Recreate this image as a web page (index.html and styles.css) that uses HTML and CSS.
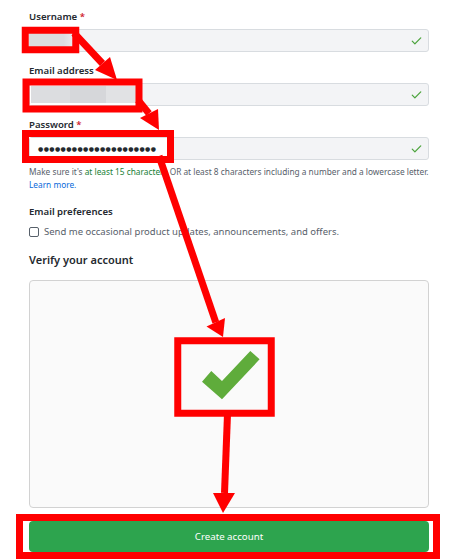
FILE: index.html
```html
<!DOCTYPE html>
<html lang="en">

<head>
    <meta charset="UTF-8">
    <meta name="viewport" content="width=device-width, initial-scale=1.0">
    <title>Create your account</title>
    <link rel="stylesheet" href="styles.css">
</head>

<body>

    <form class="signup">
        <div class="field">
            <label>Username <span class="req">*</span></label>
            <div class="input">
                <span class="mask mask-user"></span>
                <svg class="ok" viewBox="0 0 16 16" width="13" height="13"><path d="M13.78 4.22a.75.75 0 0 1 0 1.06l-7.250 7.25a.75.75 0 0 1-1.06 0L2.22 9.28a.75.75 0 0 1 1.06-1.06L6 10.94l6.72-6.72a.75.75 0 0 1 1.06 0Z"/></svg>
            </div>
        </div>

        <div class="field">
            <label>Email address</label>
            <div class="input">
                <span class="mask mask-email"><span></span></span>
                <svg class="ok" viewBox="0 0 16 16" width="13" height="13"><path d="M13.78 4.22a.75.75 0 0 1 0 1.06l-7.25 7.25a.75.75 0 0 1-1.06 0L2.22 9.28a.75.75 0 0 1 1.06-1.06L6 10.94l6.72-6.72a.75.75 0 0 1 1.06 0Z"/></svg>
            </div>
        </div>

        <div class="field">
            <label>Password <span class="req">*</span></label>
            <div class="input">
                <span class="mask mask-pass">●●●●●●●●●●●●●●●●●●●●●</span>
                <svg class="ok" viewBox="0 0 16 16" width="13" height="13"><path d="M13.78 4.22a.75.75 0 0 1 0 1.06l-7.25 7.25a.75.75 0 0 1-1.06 0L2.22 9.28a.75.75 0 0 1 1.06-1.06L6 10.94l6.72-6.72a.75.75 0 0 1 1.06 0Z"/></svg>
            </div>
        </div>

        <p class="note">Make sure it's <span class="good">at least 15 characters</span> OR at least 8 characters including a number and a lowercase letter.<br><a href="#">Learn more.</a></p>

        <div class="prefs">
            <h4>Email preferences</h4>
            <label class="optin"><span class="box"></span>Send me occasional product updates, announcements, and offers.</label>
        </div>

        <h3>Verify your account</h3>
        <div class="captcha">
            <svg class="done" viewBox="0 0 58 49" width="58" height="49"><polygon points="0,30.7 9.3,20 20,30 48.3,0 57.6,8.3 20,48.3"/></svg>
        </div>

        <button type="button" class="submit">Create account</button>
    </form>

    <!-- annotation overlay -->
    <svg class="marks" width="469" height="560" viewBox="0 0 469 560">
        <g class="frames">
            <rect x="25.25" y="30.25" width="50.5" height="19.5"/>
            <rect x="26" y="82" width="113" height="27"/>
            <rect x="25.5" y="133.5" width="145" height="26"/>
            <rect x="177.75" y="340.75" width="93.5" height="72.5"/>
            <rect x="19.5" y="517.5" width="417" height="38"/>
        </g>
        <g class="lines">
            <line x1="74" y1="33" x2="102.5" y2="63.5"/>
            <line x1="138" y1="100" x2="149" y2="113.5"/>
            <line x1="159" y1="156" x2="215.8" y2="322.3"/>
            <line x1="227.5" y1="414" x2="224.5" y2="493"/>
        </g>
        <g class="heads">
            <polygon points="95,70 110,57 117,80"/>
            <polygon points="140,118 158,109 159,130"/>
            <polygon points="206.5,326.5 225,318 223,337"/>
            <polygon points="213,493 235,493 223,513"/>
        </g>
    </svg>

</body>

</html>
```

FILE: styles.css
```css
body {
    margin: 0;
    font-family: "Noto Sans", "Open Sans", sans-serif;
    color: #24292f;
    background-color: #fff;
}

.signup {
    width: 400px;
    padding: 9px 0 0 29px;
}

.field + .field {
    margin-top: 11px;
}

.field label {
    display: block;
    font-size: 9.6px;
    font-weight: 600;
    line-height: 16px;
    margin-bottom: 4px;
}

.req {
    color: #cf222e;
}

.input {
    box-sizing: border-box;
    height: 23px;
    display: flex;
    align-items: center;
    padding-right: 5px;
    background-color: #f3f4f6;
    border: 1px solid #d8dce0;
    border-radius: 3px;
}

.ok {
    margin-left: auto;
    fill: #4aa33b;
}

.mask {
    align-self: stretch;
}

.mask-user {
    width: 42px;
    background: linear-gradient(to right, #dcdde0 80%, #e9eaec);
}

.mask-email {
    width: 107px;
    padding: 2px 1px;
    background-color: #fff;
    display: flex;
}

.mask-email span {
    flex: 1;
    background: linear-gradient(to right, #dcdde0 0 36%, #d6d7da 36% 70%, #e1e2e4 70%);
}

.mask-pass {
    width: 129px;
    padding-left: 8px;
    background-color: #fff;
    font-family: "DejaVu Sans", sans-serif;
    font-size: 6px;
    letter-spacing: 0.4px;
    line-height: 21px;
    color: #24292f;
}

.note {
    margin: 5px 0 0;
    font-size: 8.3px;
    line-height: 13px;
    color: #57606a;
    white-space: nowrap;
}

.good {
    color: #1a7f37;
}

.note a {
    color: #0969da;
    text-decoration: none;
}

.prefs {
    margin-top: 13px;
}

.prefs h4 {
    margin: 0;
    font-size: 9.6px;
    font-weight: 600;
    line-height: 16px;
}

.optin {
    display: flex;
    align-items: center;
    margin-top: 4px;
    font-size: 9.5px;
    line-height: 16px;
    color: #57606a;
}

.box {
    box-sizing: border-box;
    width: 10px;
    height: 10px;
    margin-right: 5px;
    border: 1px solid #57606a;
    border-radius: 2px;
    background-color: #fff;
}

h3 {
    margin: 11px 0 0;
    font-size: 11px;
    font-weight: 600;
    line-height: 18px;
}

.captcha {
    box-sizing: border-box;
    height: 228px;
    margin-top: 11px;
    padding-top: 70px;
    display: flex;
    justify-content: center;
    align-items: flex-start;
    background-color: #fafafa;
    border: 1px solid #d2d2d2;
    border-radius: 4px;
}

.done {
    margin-left: 3px;
    fill: #5fac3b;
}

.submit {
    display: block;
    width: 400px;
    height: 31px;
    margin-top: 13px;
    padding: 0;
    border: none;
    border-radius: 4px;
    background-color: #2da44e;
    color: #fff;
    font-family: inherit;
    font-size: 9.7px;
}

.marks {
    position: absolute;
    top: 0;
    left: 0;
    pointer-events: none;
}

.marks .frames rect {
    fill: none;
    stroke: #ff0000;
    stroke-width: 7;
}

.marks .lines line {
    stroke: #ff0000;
    stroke-width: 7;
}

.marks .heads polygon {
    fill: #ff0000;
}
```
